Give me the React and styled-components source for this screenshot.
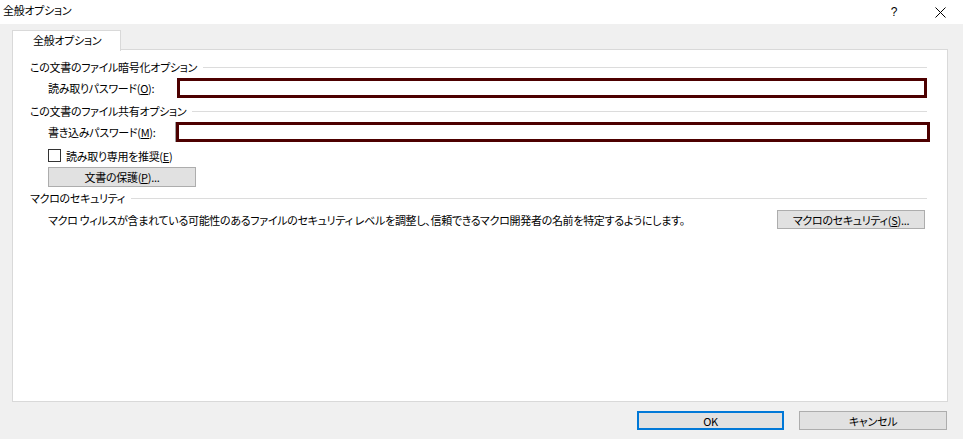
import React from "react";
import styled, { createGlobalStyle } from "styled-components";

const Global = createGlobalStyle`
  html, body { margin: 0; padding: 0; background: #f0f0f0; }
  body {
    font-family: "Noto Sans CJK JP", "Noto Sans", sans-serif;
    font-size: 11px;
    letter-spacing: -0.3px;
    color: #000;
    font-feature-settings: "palt";
  }
  * { box-sizing: border-box; }
`;

const Window = styled.div`
  width: 963px;
  height: 439px;
  display: flex;
  flex-direction: column;
  background: #f0f0f0;
  overflow: hidden;
`;

const TitleBar = styled.div`
  height: 24px;
  background: #fff;
  display: flex;
  align-items: center;
  padding-left: 3px;
  flex-shrink: 0;
`;

const TitleText = styled.div`
  flex: 1;
  line-height: 24px;
  margin-top: -4px;
`;

const CaptionButton = styled.div`
  width: 46px;
  height: 24px;
  display: flex;
  align-items: center;
  justify-content: center;
  font-family: "Liberation Sans", sans-serif;
  font-size: 12px;
`;

const Body = styled.div`
  flex: 1;
  display: flex;
  flex-direction: column;
  padding: 6px 15px 0 12px;
`;

const TabStrip = styled.div`
  display: flex;
  height: 20px;
  position: relative;
  z-index: 1;
  margin-bottom: -1px;
`;

const Tab = styled.div`
  width: 109px;
  height: 21px;
  background: #fff;
  border: 1px solid #d9d9d9;
  border-bottom: none;
  padding-left: 20px;
  line-height: 19px;
`;

const Panel = styled.div`
  height: 353px;
  background: #fff;
  border: 1px solid #d9d9d9;
  display: flex;
  flex-direction: column;
  padding: 10px 20px 0 17px;
`;

const GroupHeading = styled.div`
  display: flex;
  align-items: center;
  height: 14px;
  gap: 6px;
  margin-top: ${(p) => p.$mt || 0}px;
  &::after {
    content: "";
    flex: 1;
    height: 1px;
    background: #dcdcdc;
  }
`;

const FieldRow = styled.div`
  display: grid;
  grid-template-columns: 129px 1fr;
  align-items: center;
  padding-left: 18px;
  margin-top: ${(p) => p.$mt || 0}px;
`;

const Label = styled.label`
  white-space: nowrap;
`;

const Password = styled.div`
  height: 20px;
  border: 3px solid #4d0000;
  background: #fff;
  margin-left: ${(p) => (p.$wide ? -1 : 0)}px;
  margin-right: ${(p) => (p.$wide ? -3 : 0)}px;
  ${(p) => (p.$wide ? "box-shadow: -1px 0 0 #a0a0a0;" : "")}
`;

const CheckRow = styled.div`
  display: flex;
  align-items: center;
  gap: 5px;
  padding-left: 18px;
  margin-top: 7px;
  height: 13px;
`;

const Box = styled.div`
  width: 13px;
  height: 13px;
  border: 1px solid #333;
  background: #fff;
`;

const Button = styled.div`
  width: ${(p) => p.$w || 148}px;
  height: ${(p) => p.$h || 20}px;
  background: #e1e1e1;
  border: ${(p) => (p.$default ? "2px solid #0078d7" : "1px solid #adadad")};
  display: flex;
  align-items: center;
  justify-content: center;
  flex-shrink: 0;
  white-space: nowrap;
`;

const ButtonRow = styled.div`
  padding-left: 18px;
  margin-top: 5px;
`;

const DescRow = styled.div`
  display: flex;
  align-items: center;
  justify-content: space-between;
  padding-left: 18px;
  margin-top: 5px;
  margin-right: 2px;
`;

const Footer = styled.div`
  display: flex;
  justify-content: flex-end;
  gap: 15px;
  margin-top: 9px;
  margin-right: 1px;
`;

export default function App() {
  return (
    <>
      <Global />
      <Window>
        <TitleBar>
          <TitleText>全般オプション</TitleText>
          <CaptionButton>?</CaptionButton>
          <CaptionButton>
            <svg width="11" height="11" viewBox="0 0 11 11">
              <path d="M0.5 0.5 L10.5 10.5 M10.5 0.5 L0.5 10.5" stroke="#000" strokeWidth="1" fill="none" />
            </svg>
          </CaptionButton>
        </TitleBar>
        <Body>
          <TabStrip>
            <Tab>全般オプション</Tab>
          </TabStrip>
          <Panel>
            <GroupHeading>この文書のファイル暗号化オプション</GroupHeading>
            <FieldRow $mt={4}>
              <Label>読み取りパスワード(<u>O</u>):</Label>
              <Password />
            </FieldRow>
            <GroupHeading $mt={6}>この文書のファイル共有オプション</GroupHeading>
            <FieldRow $mt={4}>
              <Label>書き込みパスワード(<u>M</u>):</Label>
              <Password $wide />
            </FieldRow>
            <CheckRow>
              <Box />
              <span>読み取り専用を推奨(<u>E</u>)</span>
            </CheckRow>
            <ButtonRow>
              <Button>文書の保護(<u>P</u>)...</Button>
            </ButtonRow>
            <GroupHeading $mt={4}>マクロのセキュリティ</GroupHeading>
            <DescRow>
              <span>マクロ ウィルスが含まれている可能性のあるファイルのセキュリティ レベルを調整し、信頼できるマクロ開発者の名前を特定するようにします。</span>
              <Button $h={19}>マクロのセキュリティ(<u>S</u>)...</Button>
            </DescRow>
          </Panel>
          <Footer>
            <Button $w={147} $h={19} $default>OK</Button>
            <Button $w={148} $h={19}>キャンセル</Button>
          </Footer>
        </Body>
      </Window>
    </>
  );
}
